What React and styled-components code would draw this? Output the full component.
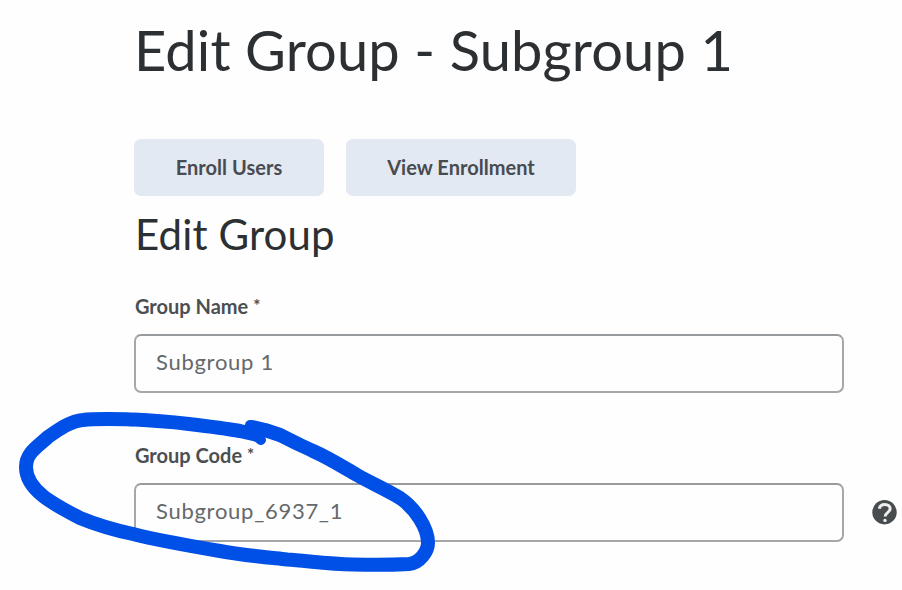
import React from "react";
import styled, { createGlobalStyle } from "styled-components";

const GlobalStyle = createGlobalStyle`
  * { box-sizing: border-box; }
  body { margin: 0; background: #fff; font-family: Lato, "Liberation Sans", sans-serif; }
`;

const Page = styled.main`
  position: relative;
  width: 902px;
  height: 590px;
  padding: 16px 0 0 134px;
  overflow: hidden;
  background: #fefefe;
  color: #2d3033;
`;

const Title = styled.h1`
  margin: 0;
  height: 123px;
  font-size: 56px;
  line-height: 67px;
  font-weight: 400;
  letter-spacing: 0.14px;
  white-space: nowrap;
`;

const Actions = styled.div`
  display: flex;
  gap: 22px;
`;

const Button = styled.button`
  width: ${(p) => p.$width}px;
  height: 57px;
  padding: 0 0 1px;
  border: 0;
  border-radius: 7px;
  background: #e2e9f2;
  color: #484b50;
  font: 700 20px/24px Lato, "Liberation Sans", sans-serif;
  letter-spacing: 0.03px;
  white-space: nowrap;
`;

const SectionTitle = styled.h2`
  margin: 0;
  height: 98px;
  padding: 13px 0 0 1px;
  font-size: 42px;
  line-height: 50px;
  font-weight: 400;
  letter-spacing: 0.14px;
`;

const Field = styled.div`
  height: ${(p) => p.$height}px;
`;

const Label = styled.label`
  display: block;
  height: 40px;
  padding-left: 1px;
  color: #4c4f52;
  font-size: 20px;
  line-height: 25px;
  font-weight: 700;
  letter-spacing: 0;
`;

const Required = styled.span`
  margin-left: 5px;
  font-size: 17px;
  line-height: 1;
  vertical-align: 2px;
`;

const FieldRow = styled.div`
  display: flex;
  align-items: center;
  gap: 28px;
`;

const Input = styled.input`
  width: 710px;
  height: 59px;
  padding: 0 20px 5px;
  border: 2px solid #a5a8aa;
  border-top-color: #979b9e;
  border-radius: 7px;
  background: #fefefe;
  color: #65696c;
  font: 400 22px/28px Lato, "Liberation Sans", sans-serif;
  letter-spacing: 0.72px;
  outline: none;
`;

const HelpIcon = styled.svg`
  width: 25px;
  height: 25px;
  flex: none;
`;

const Marker = styled.svg`
  position: absolute;
  inset: 0;
  width: 902px;
  height: 590px;
  pointer-events: none;
`;

export default function App() {
  return (
    <>
      <GlobalStyle />
      <Page>
        <Title>Edit Group - Subgroup 1</Title>
        <Actions>
          <Button $width={190}>Enroll Users</Button>
          <Button $width={230}>View Enrollment</Button>
        </Actions>
        <SectionTitle>Edit Group</SectionTitle>
        <Field $height={149}>
          <Label htmlFor="name">Group Name<Required>*</Required></Label>
          <FieldRow>
            <Input id="name" defaultValue="Subgroup 1" />
          </FieldRow>
        </Field>
        <Field $height={110}>
          <Label htmlFor="code">Group Code<Required>*</Required></Label>
          <FieldRow>
            <Input id="code" defaultValue="Subgroup_6937_1" />
            <HelpIcon viewBox="0 0 25 25" aria-label="Help">
              <circle cx="12.5" cy="12.2" r="12.2" fill="#494c4e" />
              <path d="M7.3 8.8C7.7 6 9.9 4.4 12.9 4.4C16 4.4 18.2 6.1 18.2 8.8C18.2 12.4 13.2 12.4 13.2 16.5" fill="none" stroke="#eeeeee" strokeWidth="3" />
              <circle cx="13" cy="20.4" r="1.7" fill="#eeeeee" />
            </HelpIcon>
          </FieldRow>
        </Field>
        <Marker viewBox="0 0 902 590" fill="none" stroke="#004fe6" strokeLinecap="round" strokeLinejoin="round">
          <path strokeWidth="14" d="M252 427L265 430L280 435L296 443C302 446 307 448 313 451C329 458 343 467 357 475C371 483 387 490 400 498C415 508 428 528 428 543C428 551 420 563 409 564C391 565 371 565 353 564.5C330 564 308 561 287 559.5C264 557 242 555 220 551C190 546 161 541 133 534C114 530 97 525 80 518C53 504 26 490 26 467C26 453 37 447 48 437C58 430 70 421 83 420C91 419 99 419 107 419C135 419 162 421 189 424C206 426 223 428 240 431L258 435" />
          <path strokeWidth="10" d="M250 425L270 430M256 436L261 440" />
        </Marker>
      </Page>
    </>
  );
}
